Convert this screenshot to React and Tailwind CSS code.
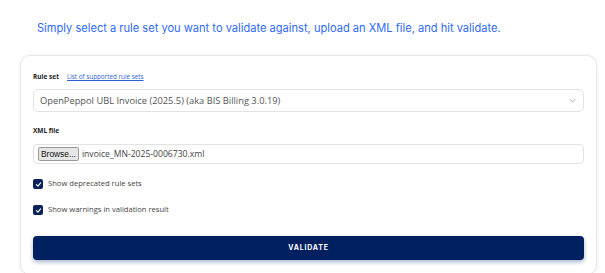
import React from 'react';

const Check = () => (
    <span className="w-[10px] h-[10px] rounded-[2px] bg-[#0b2358] flex items-center justify-center shrink-0">
        <svg width="7" height="7" viewBox="0 0 10 10" fill="none">
            <path d="M2 5.2 L4.2 7.3 L8 2.8" stroke="white" strokeWidth="1.6" strokeLinecap="round" strokeLinejoin="round" />
        </svg>
    </span>
);

const App = () => {
    return (
        <div className="w-[605px] h-[273px] bg-white overflow-hidden" style={{ fontFamily: '"Open Sans", sans-serif' }}>
            <div className="h-[55px] flex items-start pt-[21px] pl-[37px]">
                <p className="text-[11.1px] leading-[15px] text-[#2f6af5]" style={{ fontFamily: 'Inter, sans-serif' }}>
                    Simply select a rule set you want to validate against, upload an XML file, and hit validate.
                </p>
            </div>

            <div className="ml-[20px] w-[577px] h-[220px] rounded-[10px] border border-[#e6e6e6] shadow-[0_0_4px_rgba(0,0,0,0.06)] px-[12px] pt-[16px]">
                {/* rule set */}
                <div className="flex items-center gap-[8px] h-[10px]">
                    <span className="text-[6.5px] font-bold text-[#222]">Rule set</span>
                    <span className="text-[6.3px] text-[#2f5fd0] underline">List of supported rule sets</span>
                </div>
                <div className="mt-[7px] h-[23px] rounded-[5px] border border-[#e3e3e3] flex items-center justify-between pl-[6px] pr-[7px]">
                    <span className="text-[9.3px] text-[#555]">OpenPeppol UBL Invoice (2025.5) (aka BIS Billing 3.0.19)</span>
                    <svg width="7" height="5" viewBox="0 0 8 5" fill="none">
                        <path d="M1 1 L4 4 L7 1" stroke="#999" strokeWidth="1" />
                    </svg>
                </div>

                {/* xml file */}
                <div className="mt-[14px] h-[10px] flex items-center">
                    <span className="text-[6.5px] font-bold text-[#222]">XML file</span>
                </div>
                <div className="mt-[8px] h-[20px] rounded-[4px] border border-[#e3e3e3] flex items-center pl-[4px]">
                    <span className="h-[14px] px-[2px] bg-[#e6e6e6] border border-[#9a9a9a] rounded-[2px] text-[8.4px] leading-[12px] text-[#111]" style={{ fontFamily: '"Liberation Sans", sans-serif' }}>Browse...</span>
                    <span className="ml-[3px] text-[8.6px] text-[#444]">invoice_MN-2025-0006730.xml</span>
                </div>

                {/* checkboxes */}
                <div className="mt-[15px] flex items-center gap-[5px] h-[10px]">
                    <Check />
                    <span className="text-[7.6px] text-[#444]">Show deprecated rule sets</span>
                </div>
                <div className="mt-[16px] flex items-center gap-[5px] h-[10px]">
                    <Check />
                    <span className="text-[7.6px] text-[#444]">Show warnings in validation result</span>
                </div>

                {/* button */}
                <button className="mt-[21px] w-full h-[24px] rounded-[4px] bg-[#01205f] shadow-[0_2px_4px_rgba(0,32,95,0.35)] text-white text-[7px] font-bold tracking-[0.8px]" style={{ fontFamily: 'Inter, sans-serif' }}>
                    VALIDATE
                </button>
            </div>
        </div>
    );
};

export default App;
